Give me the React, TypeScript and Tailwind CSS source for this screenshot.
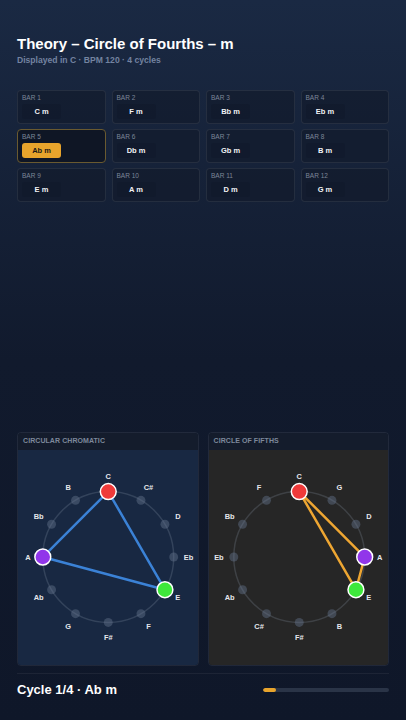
import React from "react";

const FONT = { fontFamily: '"Liberation Sans", Arial, sans-serif' };

const bars = [
  "C m", "F m", "Bb m", "Eb m",
  "Ab m", "Db m", "Gb m", "B m",
  "E m", "A m", "D m", "G m",
];

const chromatic = ["C", "C#", "D", "Eb", "E", "F", "F#", "G", "Ab", "A", "Bb", "B"];
const fifths = ["C", "G", "D", "A", "E", "B", "F#", "C#", "Ab", "Eb", "Bb", "F"];

const noteColors: Record<string, string> = {
  C: "#ef3a3a",
  E: "#3ee83b",
  A: "#9136ea",
};

function Wheel({ notes, line }: { notes: string[]; line: string }) {
  const cx = 91;
  const cy = 107;
  const r = 66;
  const lr = 81;
  const pos = (i: number, rad: number) => {
    const a = (i * Math.PI) / 6;
    return { x: cx + rad * Math.sin(a), y: cy - rad * Math.cos(a) };
  };
  const active = ["C", "E", "A"].map((n) => pos(notes.indexOf(n), r));
  const tri = active.map((p) => `${p.x},${p.y}`).join(" ");

  return (
    <svg width="181" height="215" viewBox="0 0 181 215" className="block">
      <circle cx={cx} cy={cy} r={r} fill="none" stroke="rgba(148,163,184,0.22)" strokeWidth="1.5" />
      <polygon points={tri} fill="none" stroke={line} strokeWidth="2.5" strokeLinejoin="round" />
      {notes.map((n, i) => {
        const p = pos(i, r);
        const l = pos(i, lr);
        const c = noteColors[n];
        return (
          <g key={n}>
            {c ? (
              <circle cx={p.x} cy={p.y} r="8" fill={c} stroke="#ffffff" strokeWidth="1.5" />
            ) : (
              <circle cx={p.x} cy={p.y} r="4.5" fill="#64748b" fillOpacity="0.45" />
            )}
            <text
              x={l.x}
              y={l.y}
              textAnchor="middle"
              dominantBaseline="central"
              fontSize="7.5"
              fontWeight="700"
              fill="#e5e7eb"
              style={FONT}
            >
              {n}
            </text>
          </g>
        );
      })}
    </svg>
  );
}

function Panel({ title, body, children }: { title: string; body: string; children: React.ReactNode }) {
  return (
    <div className="flex-1 rounded-[4px] border border-white/[0.07] overflow-hidden">
      <div className="h-[17px] bg-[#141c2c] px-[5px] flex items-center text-[7px] font-bold tracking-[0.01em] text-[#7d889b]">
        {title}
      </div>
      <div className={`${body} h-[215px] flex justify-center`}>{children}</div>
    </div>
  );
}

export default function App() {
  return (
    <div
      className="h-[720px] w-full flex flex-col px-[17px] bg-gradient-to-b from-[#1a2943] via-[#111a2d] to-[#0f1729]"
      style={FONT}
    >
      <h1 className="pt-[34px] text-[15px] leading-[19px] font-bold text-white">
        Theory – Circle of Fourths – m
      </h1>
      <p className="mt-[1px] text-[8.6px] leading-[12px] font-bold text-[#7383a0]">
        Displayed in C · BPM 120 · 4 cycles
      </p>

      <div className="mt-[24px] grid grid-cols-4 gap-x-[6px] gap-y-[5px]">
        {bars.map((chord, i) => {
          const current = i === 4;
          return (
            <div
              key={chord}
              className={`h-[34px] flex flex-col rounded-[4px] border px-[4px] pt-[3px] ${
                current ? "border-[#6a5a30] bg-[#0f1625]" : "border-white/[0.08] bg-[#121b2c]/70"
              }`}
            >
              <div className="text-[6.5px] leading-[8px] text-[#7c8698]">BAR {i + 1}</div>
              <div
                className={`mt-[2px] flex h-[15px] w-[39px] items-center justify-center rounded-[3px] text-[7.5px] font-bold ${
                  current ? "bg-[#e8a42c] text-[#1c1a16]" : "bg-[#10192b]/60 text-[#f1f3f6]"
                }`}
              >
                {chord}
              </div>
            </div>
          );
        })}
      </div>

      <div className="mt-auto flex gap-[9px]">
        <Panel title="CIRCULAR CHROMATIC" body="bg-[#182842]">
          <Wheel notes={chromatic} line="#3b82d6" />
        </Panel>
        <Panel title="CIRCLE OF FIFTHS" body="bg-[#262626]">
          <Wheel notes={fifths} line="#eea632" />
        </Panel>
      </div>

      <div className="mt-[7px] mb-[15px] border-t border-white/[0.06] h-[32px] flex items-center justify-between">
        <span className="text-[13px] font-bold text-white">Cycle 1/4 · Ab m</span>
        <div className="w-[126px] h-[4px] rounded-full bg-[#2a3447] overflow-hidden">
          <div className="h-full w-[10%] rounded-full bg-[#e8a42c]" />
        </div>
      </div>
    </div>
  );
}
